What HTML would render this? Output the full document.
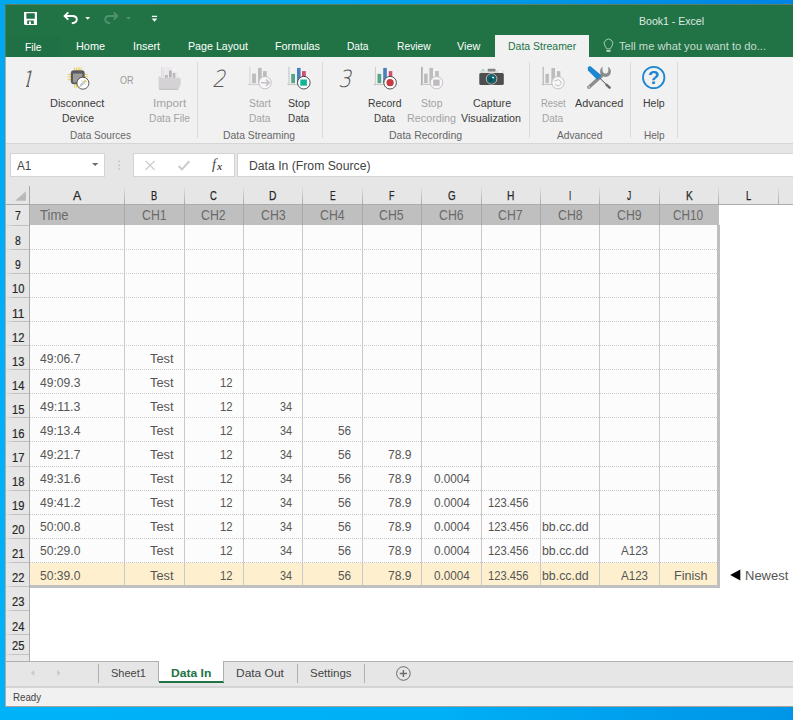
<!DOCTYPE html>
<html><head><meta charset="utf-8"><title>Book1 - Excel</title>
<style>
html,body{margin:0;padding:0;}
body{width:793px;height:720px;overflow:hidden;position:relative;font-family:"Liberation Sans",sans-serif;
 background:linear-gradient(90deg,#00a8f0 0%,#00a6ef 40%,#0092e6 75%,#0084e4 100%);}
.a{position:absolute;}
.t{position:absolute;white-space:pre;line-height:20px;height:20px;transform-origin:0 50%;font-family:"Liberation Sans",sans-serif;}
#bot{left:0;top:707px;width:793px;height:13px;background:linear-gradient(90deg,#00b2f8 0%,#00b0f6 55%,#009ceb 85%,#0096e8 100%);}
#lft{left:0;top:0;width:5px;height:720px;background:linear-gradient(180deg,#00a6f0,#00aff8 45%,#00b2f8);}
#win{left:5px;top:4px;width:788px;height:703px;background:#fff;}
#grn{left:5px;top:4.2px;width:788px;height:53.2px;background:#217346;}
#atab{left:495px;top:35px;width:94px;height:23px;background:#f1f1f1;}
#rib{left:5px;top:57.4px;width:788px;height:85.6px;background:#f1f1f1;}
#fbar{left:5px;top:143px;width:788px;height:61px;background:#e6e6e6;}
.box{background:#fff;border:1px solid #d4d4d4;box-sizing:border-box;}
.gsep{width:1px;top:62px;height:76px;background:#dcdcdc;}
.csep{width:1px;top:186px;height:18px;background:linear-gradient(180deg,#e6e6e6,#a9a9a9);}
.vline{width:1px;top:225px;height:360px;background:#c9c9c9;}
.hdot{left:30px;width:687px;height:1px;background-image:repeating-linear-gradient(90deg,#c6c6c6 0,#c6c6c6 1px,transparent 1px,transparent 2px);}
.rsep{left:5px;width:24px;height:1px;background:linear-gradient(90deg,#dedede,#c2c2c2 40%,#c0c0c0);}
</style></head><body>
<div class="a" id="lft"></div>
<div class="a" id="bot"></div>
<div class="a" id="win"></div>
<div class="a" id="grn"></div>
<div class="a" style="left:5px;top:35.6px;width:54.5px;height:21.8px;background:#1f7044"></div>
<div class="a" id="atab"></div>
<div class="a" id="rib"></div>
<div class="a" id="fbar"></div>
<div class="a" style="left:5px;top:142.9px;width:788px;height:1px;background:#d6d6d6"></div>
<!-- ribbon group separators -->
<div class="a gsep" style="left:197px"></div>
<div class="a gsep" style="left:322px"></div>
<div class="a gsep" style="left:529px"></div>
<div class="a gsep" style="left:630px"></div>
<div class="a gsep" style="left:677px"></div>
<!-- formula bar boxes -->
<div class="a box" style="left:10px;top:153px;width:95px;height:24px"></div>
<div class="a box" style="left:133px;top:153px;width:101.6px;height:24px"></div>
<div class="a box" style="left:237px;top:153px;width:570px;height:24px"></div>
<!-- grid area -->
<div class="a" style="left:5px;top:204px;width:25px;height:457px;background:#e6e6e6"></div>
<div class="a" style="left:29px;top:186px;width:1px;height:475px;background:#ababab"></div>
<div class="a" style="left:5px;top:203.7px;width:788px;height:1.2px;background:#ababab"></div>
<div class="a" style="left:30px;top:204.9px;width:689px;height:20.3px;background:#bfbfbf"></div>
<div class="a" style="left:30px;top:225.2px;width:688px;height:361px;background:#fcfcfc"></div>
<div class="a" style="left:30px;top:562.8px;width:688px;height:23px;background:#fef0ce"></div>
<div class="a" style="left:717px;top:225px;width:2.6px;height:362.5px;background:#bfbfbf"></div>
<div class="a" style="left:30px;top:585px;width:689.6px;height:2.6px;background:#c0c0c0"></div>
<div class="a csep" style="left:124.0px"></div>
<div class="a csep" style="left:183.5px"></div>
<div class="a csep" style="left:242.9px"></div>
<div class="a csep" style="left:302.3px"></div>
<div class="a csep" style="left:361.7px"></div>
<div class="a csep" style="left:421.1px"></div>
<div class="a csep" style="left:480.5px"></div>
<div class="a csep" style="left:539.9px"></div>
<div class="a csep" style="left:599.3px"></div>
<div class="a csep" style="left:658.7px"></div>
<div class="a csep" style="left:718.1px"></div>
<div class="a csep" style="left:777.5px"></div>
<div class="a vline" style="left:124.0px"></div>
<div class="a" style="left:124.0px;top:204.9px;width:1px;height:20.3px;background:#a9a9a9"></div>
<div class="a vline" style="left:183.5px"></div>
<div class="a" style="left:183.5px;top:204.9px;width:1px;height:20.3px;background:#a9a9a9"></div>
<div class="a vline" style="left:242.9px"></div>
<div class="a" style="left:242.9px;top:204.9px;width:1px;height:20.3px;background:#a9a9a9"></div>
<div class="a vline" style="left:302.3px"></div>
<div class="a" style="left:302.3px;top:204.9px;width:1px;height:20.3px;background:#a9a9a9"></div>
<div class="a vline" style="left:361.7px"></div>
<div class="a" style="left:361.7px;top:204.9px;width:1px;height:20.3px;background:#a9a9a9"></div>
<div class="a vline" style="left:421.1px"></div>
<div class="a" style="left:421.1px;top:204.9px;width:1px;height:20.3px;background:#a9a9a9"></div>
<div class="a vline" style="left:480.5px"></div>
<div class="a" style="left:480.5px;top:204.9px;width:1px;height:20.3px;background:#a9a9a9"></div>
<div class="a vline" style="left:539.9px"></div>
<div class="a" style="left:539.9px;top:204.9px;width:1px;height:20.3px;background:#a9a9a9"></div>
<div class="a vline" style="left:599.3px"></div>
<div class="a" style="left:599.3px;top:204.9px;width:1px;height:20.3px;background:#a9a9a9"></div>
<div class="a vline" style="left:658.7px"></div>
<div class="a" style="left:658.7px;top:204.9px;width:1px;height:20.3px;background:#a9a9a9"></div>
<div class="a hdot" style="top:248.8px"></div>
<div class="a hdot" style="top:272.9px"></div>
<div class="a hdot" style="top:296.9px"></div>
<div class="a hdot" style="top:321.0px"></div>
<div class="a hdot" style="top:345.1px"></div>
<div class="a hdot" style="top:369.2px"></div>
<div class="a hdot" style="top:393.3px"></div>
<div class="a hdot" style="top:417.3px"></div>
<div class="a hdot" style="top:441.4px"></div>
<div class="a hdot" style="top:465.5px"></div>
<div class="a hdot" style="top:489.6px"></div>
<div class="a hdot" style="top:513.7px"></div>
<div class="a hdot" style="top:537.7px"></div>
<div class="a hdot" style="top:561.8px"></div>
<div class="a rsep" style="top:224.6px"></div>
<div class="a rsep" style="top:248.8px"></div>
<div class="a rsep" style="top:272.9px"></div>
<div class="a rsep" style="top:296.9px"></div>
<div class="a rsep" style="top:321.0px"></div>
<div class="a rsep" style="top:345.1px"></div>
<div class="a rsep" style="top:369.2px"></div>
<div class="a rsep" style="top:393.3px"></div>
<div class="a rsep" style="top:417.3px"></div>
<div class="a rsep" style="top:441.4px"></div>
<div class="a rsep" style="top:465.5px"></div>
<div class="a rsep" style="top:489.6px"></div>
<div class="a rsep" style="top:513.7px"></div>
<div class="a rsep" style="top:537.7px"></div>
<div class="a rsep" style="top:561.8px"></div>
<div class="a rsep" style="top:585.9px"></div>
<div class="a rsep" style="top:610.0px"></div>
<div class="a rsep" style="top:634.1px"></div>
<div class="a rsep" style="top:653.7px"></div>
<!-- sheet tab bar -->
<div class="a" style="left:5px;top:661px;width:788px;height:26px;background:#e6e6e6"></div>
<div class="a" style="left:5px;top:660.7px;width:788px;height:1.2px;background:#b0b0b0"></div>
<div class="a" style="left:158.5px;top:661px;width:65px;height:21px;background:#fff"></div>
<div class="a" style="left:158.5px;top:681.3px;width:65px;height:2px;background:#217346"></div>
<div class="a" style="left:158px;top:661px;width:1px;height:21px;background:#b0b0b0"></div>
<div class="a" style="left:223px;top:661px;width:1px;height:21px;background:#b0b0b0"></div>
<div class="a" style="left:98.3px;top:664px;width:1px;height:18.5px;background:#b0b0b0"></div>
<div class="a" style="left:296.7px;top:664px;width:1px;height:18.5px;background:#b0b0b0"></div>
<div class="a" style="left:364.3px;top:664px;width:1px;height:18.5px;background:#b0b0b0"></div>
<div class="a" style="left:5px;top:686px;width:788px;height:1.5px;background:#d4d4d4"></div>
<div class="a" style="left:5px;top:687.5px;width:788px;height:19.5px;background:#f1f1f1"></div>
<div class="a" style="left:5px;top:4px;width:788px;height:1px;background:#5d7f5f"></div>
<div class="a" style="left:5px;top:57px;width:1px;height:650px;background:#b3aaa5"></div>
<div class="a" style="left:5px;top:4px;width:1px;height:53px;background:#4f7a55"></div>
<div class="a" style="left:5px;top:706.4px;width:788px;height:1px;background:#a9a29c"></div>
<svg class="a" style="left:0;top:0" width="793" height="720" viewBox="0 0 793 720">
<!-- save icon -->
<g fill="#fff">
<path d="M24 12 h13 v13 h-12 l-1 -1 z M26.4 13.2 v5.6 h8.4 v-5.6 z M27.2 20.6 v3.4 h6.6 v-3.4 z M29 21.6 h2 v2.4 h-2z" fill-rule="evenodd"/>
</g>
<!-- undo -->
<g fill="none" stroke="#fff" stroke-width="1.9" stroke-linejoin="miter">
<path d="M68.3 12.3 L64.6 16 L68.3 19.7"/>
<path d="M64.8 16 H72.5 C75.3 16 76.8 17.6 76.8 19.6 C76.8 21.6 75 23 71.8 23.2"/>
</g>
<path d="M85.3 16.9 h4.8 l-2.4 2.8z" fill="#fff"/>
<!-- redo -->
<g fill="none" stroke="#4f9370" stroke-width="1.9">
<path d="M113.7 12.3 L117.4 16 L113.7 19.7"/>
<path d="M117.2 16 H109.5 C106.7 16 105.2 17.6 105.2 19.6 C105.2 21.6 107 23 110.2 23.2"/>
</g>
<path d="M126 16.9 h4.8 l-2.4 2.8z" fill="#4f9370"/>
<!-- customize QAT -->
<path d="M151.9 15.7 h5.2 v1.3 h-5.2z M151.7 18.4 h5.6 l-2.8 3.3z" fill="#fff"/>
<!-- lightbulb -->
<path d="M606.9 48.9 L605 45.9 A4.3 4.3 0 1 1 612 45.9 L610.1 48.9 Z" fill="none" stroke="#a9ccb8" stroke-width="1"/>
<path d="M605.9 50 h5.2 l-1 1.9 h-3.2z" fill="#a9ccb8"/>
<!-- chip icon -->
<g fill="#ecd15c">
<rect x="74" y="67.4" width="1" height="3"/><rect x="76" y="67.4" width="1.3" height="3"/><rect x="78.4" y="67.4" width="1.3" height="3"/><rect x="80.6" y="67.4" width="1" height="3"/>
<rect x="74" y="84.4" width="1" height="3.4"/><rect x="76" y="84.4" width="1.3" height="3.4"/>
<rect x="67.6" y="74" width="3.4" height="1"/><rect x="67.6" y="76.2" width="3.4" height="1.2"/><rect x="67.6" y="79" width="3.4" height="1.2"/>
<rect x="84.6" y="74" width="3.4" height="1"/><rect x="84.6" y="76.2" width="3.4" height="1.2"/>
</g>
<rect x="70.8" y="70.2" width="13.9" height="14" rx="3.3" fill="#5a5a5a"/>
<rect x="73" y="73.4" width="9.4" height="9" rx="0.8" fill="#9a9a9a"/>
<circle cx="82.9" cy="83.2" r="6" fill="#fff" stroke="#4a4a4a" stroke-width="0.9"/>
<g stroke="#c3c9cc" stroke-width="2.2" stroke-linecap="round"><path d="M80.8 85.4 L84.2 82"/></g>
<path d="M79.6 86.6 L81 85.2" stroke="#b9c0c4" stroke-width="1"/>
<path d="M84.2 79.8 L85.6 81.2 M85.4 81.2 L86.6 82.4" stroke="#e9c73c" stroke-width="1.1"/>
<path d="M81.3 80.2 L85.8 84.8" stroke="#d4d8da" stroke-width="1"/>
<!-- import icon -->
<path d="M161.1 67.1 H172.6 L178 71.6 V77 H161.1Z" fill="#ece9ec"/>
<path d="M172.6 67.1 L178 71.6 H172.6Z" fill="#f6f4f6"/>
<rect x="161.2" y="67.4" width="0.9" height="9.4" fill="#d9d6d9"/>
<rect x="163" y="70" width="0.9" height="7" fill="#dcd9dc"/>
<rect x="165" y="75" width="2.7" height="3" fill="#b9b6b9"/>
<rect x="169" y="70.6" width="2.7" height="7" fill="#b4b1b4"/>
<rect x="172.8" y="73" width="2.5" height="5" fill="#b9b6b9"/>
<path d="M158.4 76.6 H160.6 L161.2 77.8 H178 L178.4 76.4 L179.4 78.4 H180.8 V84 L178.4 89.4 H158.8Z" fill="#d5d2d5"/>
<rect x="159" y="88.9" width="19.2" height="0.9" fill="#bdbabd"/>
<!-- Start Data (disabled) -->
<rect x="249.3" y="66.9" width="1.1" height="18.4" fill="#d6d6d6"/><rect x="248.2" y="83.9" width="12" height="1.1" fill="#d0d0d0"/>
<rect x="252.1" y="73.7" width="3.8" height="9.4" fill="#bdbbbd"/><rect x="258" y="67.9" width="3.7" height="15.2" fill="#bdbbbd"/><rect x="263" y="71.1" width="3.7" height="12" fill="#bdbbbd"/>
<circle cx="265" cy="82.7" r="6.2" fill="#f8f6f8" stroke="#bdbdbd" stroke-width="0.9"/>
<path d="M261 82.7 H269 M266 79.5 L269.2 82.7 L266 85.9" fill="none" stroke="#c2c0c2" stroke-width="1.5"/>
<!-- Stop Data -->
<rect x="288.4" y="66.9" width="1.1" height="18.4" fill="#c6c6c6"/><rect x="287.3" y="83.9" width="12" height="1.1" fill="#c6c6c6"/>
<rect x="291.2" y="73.9" width="3.8" height="9.2" fill="#55a688"/><rect x="297" y="67.9" width="3.6" height="15.2" fill="#4a7fbd"/><rect x="302" y="71.1" width="3.8" height="12" fill="#cf506f"/>
<circle cx="303.8" cy="82.7" r="6.3" fill="#fff" stroke="#3c3c3c" stroke-width="0.9"/>
<rect x="300.3" y="79.5" width="6.6" height="6.2" fill="#12b497"/>
<!-- Record Data -->
<rect x="374.9" y="66.9" width="1.1" height="18.4" fill="#d0d0d0"/><rect x="373.8" y="83.9" width="12" height="1.1" fill="#c6c6c6"/>
<rect x="377.5" y="73.9" width="3.7" height="9.2" fill="#55a688"/><rect x="383.2" y="67.9" width="3.6" height="15.2" fill="#4a7fbd"/><rect x="388.8" y="71.1" width="3.5" height="12" fill="#cf506f"/>
<circle cx="390.1" cy="82.7" r="6.3" fill="#fff" stroke="#3c3c3c" stroke-width="0.9"/>
<circle cx="390.1" cy="82.7" r="3.6" fill="#c73a3f"/>
<!-- Stop Recording (disabled) -->
<rect x="421" y="66.9" width="1.7" height="18.4" fill="#b0aeb0"/><rect x="420.2" y="83.9" width="12" height="1.1" fill="#c6c6c6"/>
<rect x="424.1" y="73.7" width="3.5" height="9.4" fill="#bdbbbd"/><rect x="429.4" y="67.9" width="3.6" height="15.2" fill="#bdbbbd"/><rect x="435.2" y="71.1" width="3.6" height="12" fill="#bdbbbd"/>
<circle cx="436.5" cy="82.7" r="6.2" fill="#f8f6f8" stroke="#bdbdbd" stroke-width="0.9"/>
<rect x="433.2" y="79.6" width="6.4" height="6.2" fill="#bdbbbd"/>
<!-- Camera -->
<rect x="479.6" y="70.6" width="24" height="3.4" rx="1" fill="#dedede"/>
<rect x="499" y="70.9" width="3.2" height="1.7" fill="#fbfbfb"/>
<rect x="487.7" y="68.8" width="7.8" height="2.6" rx="0.6" fill="#858585"/>
<circle cx="483.2" cy="69.9" r="1" fill="#8cc4cc"/>
<rect x="479.3" y="72.9" width="24.5" height="12.1" rx="1.6" fill="#4e4e4e"/>
<circle cx="491.6" cy="78.9" r="5.3" fill="#3c3c3c" stroke="#dcdcdc" stroke-width="0.8"/>
<circle cx="491.6" cy="78.9" r="4.3" fill="#0b6b76"/>
<circle cx="490.8" cy="79.7" r="2.4" fill="#07545e"/>
<ellipse cx="493.1" cy="77.6" rx="1.1" ry="0.8" fill="#fff"/>
<!-- Reset Data (disabled) -->
<rect x="542.6" y="66.9" width="1.3" height="18.4" fill="#bcbabc"/><rect x="541.5" y="83.9" width="12" height="1.1" fill="#c6c6c6"/>
<rect x="545.4" y="73.9" width="3.5" height="9.2" fill="#bdbbbd"/><rect x="551.4" y="68" width="3.6" height="15.1" fill="#bdbbbd"/><rect x="556.9" y="71.1" width="3.4" height="12" fill="#bdbbbd"/>
<circle cx="558" cy="82.7" r="6.2" fill="#f8f6f8" stroke="#bdbdbd" stroke-width="0.9"/>
<path d="M556 80.6 A3 3 0 1 1 555.2 84" fill="none" stroke="#c2c0c2" stroke-width="1"/>
<path d="M554.6 79.4 L556.4 81.2 L554.4 81.6Z" fill="#c2c0c2"/>
<!-- Advanced: wrench + screwdriver -->
<path d="M587.2 86.4 L600.6 74.2 C599.4 71.4 600.2 68.6 602.5 66.6 V71 C603.2 72.9 604.6 73.6 605.5 73.6 C606.8 73.6 607.9 72.6 608.3 71.2 V66.8 C610.8 68.6 611.6 71.6 610.4 74 C609 76.6 606 77.6 603.4 76.6 L590 88.6 C588.6 89.6 586.4 88 587.2 86.4Z" fill="#8d8d8d"/>
<circle cx="589.2" cy="87" r="0.8" fill="#e4e4e4"/>
<path d="M599.6 77.9 L606.6 84.8" stroke="#4c4c4c" stroke-width="1"/>
<path d="M606.6 84.8 L609.6 87.6" stroke="#6a6a6a" stroke-width="2.5" stroke-linecap="round"/>
<path d="M587.8 67.4 C588.4 66.4 590 65.9 590.9 66.4 L601.5 75.6 L597.4 80 L588 70.6Z" fill="#1c86d1"/>
<!-- Help -->
<circle cx="653.7" cy="77.5" r="10.7" fill="none" stroke="#1c86d1" stroke-width="1.8"/>
<text x="653.7" y="84.4" font-family="Liberation Sans, sans-serif" font-size="19" font-weight="700" fill="#1c86d1" text-anchor="middle">?</text>
<!-- formula bar icons -->
<path d="M92 162.9 h6.4 l-3.2 3.2z" fill="#6a6a6a"/>
<g fill="#a8a8a8"><rect x="118.5" y="160.8" width="1.2" height="1.2"/><rect x="118.5" y="164.6" width="1.2" height="1.2"/><rect x="118.5" y="168.4" width="1.2" height="1.2"/></g>
<path d="M145.6 160.9 L154.6 169.9 M154.6 160.9 L145.6 169.9" stroke="#c9c9c9" stroke-width="1.3"/>
<path d="M178.6 166 L182 169.4 L189.4 161.2" fill="none" stroke="#c9c9c9" stroke-width="1.9"/>
<text x="212" y="169.4" font-family="Liberation Serif, serif" font-style="italic" font-size="14.6" fill="#4a4a4a">f</text>
<text x="217" y="169.8" font-family="Liberation Serif, serif" font-style="italic" font-weight="700" font-size="10.5" fill="#4a4a4a">x</text>
<!-- select-all triangle -->
<path d="M25.9 191.3 V200.8 H15.2Z" fill="#b9b9b9"/>
<!-- Newest arrow -->
<path d="M740.3 569.6 V580.6 L730.2 575.1Z" fill="#000"/>
<!-- sheet nav arrows -->
<path d="M34.3 670 V676 L30.8 673Z" fill="#c9c9c9"/>
<path d="M57.2 670 V676 L60.7 673Z" fill="#c9c9c9"/>
<!-- new sheet button -->
<circle cx="403.4" cy="673.5" r="6.8" fill="none" stroke="#6b6b6b" stroke-width="1"/>
<path d="M399.8 673.5 H407 M403.4 669.9 V677.1" stroke="#6b6b6b" stroke-width="1.4"/>
</svg>

<span class="t" style="left:638.6px;top:10.80px;font-size:11.6px;color:#dfeae3;transform:scaleX(0.9087);">Book1 - Excel</span>
<span class="t" style="left:24.6px;top:37.00px;font-size:11.8px;color:#ffffff;transform:scaleX(0.8730);">File</span>
<span class="t" style="left:76.3px;top:36.00px;font-size:11.8px;color:#ffffff;transform:scaleX(0.9215);">Home</span>
<span class="t" style="left:133.4px;top:36.00px;font-size:11.8px;color:#ffffff;transform:scaleX(0.9182);">Insert</span>
<span class="t" style="left:187.7px;top:36.00px;font-size:11.8px;color:#ffffff;transform:scaleX(0.9042);">Page Layout</span>
<span class="t" style="left:274.8px;top:36.00px;font-size:11.8px;color:#ffffff;transform:scaleX(0.9152);">Formulas</span>
<span class="t" style="left:347.2px;top:36.00px;font-size:11.8px;color:#ffffff;transform:scaleX(0.8627);">Data</span>
<span class="t" style="left:396.6px;top:36.00px;font-size:11.8px;color:#ffffff;transform:scaleX(0.8711);">Review</span>
<span class="t" style="left:457.1px;top:36.00px;font-size:11.8px;color:#ffffff;transform:scaleX(0.9148);">View</span>
<span class="t" style="left:507.6px;top:36.00px;font-size:11.8px;color:#217346;transform:scaleX(0.8890);">Data Streamer</span>
<span class="t" style="left:619.2px;top:36.00px;font-size:11.8px;color:#c9ddd1;transform:scaleX(0.9459);">Tell me what you want to do...</span>
<span class="t" style="left:20.6px;top:46.80px;font-size:69.6px;color:#5c5c5c;transform-origin:0 40.00px;transform:skewX(-13deg) scale(0.3115,0.3333);font-family:'Noto Sans CJK SC','Liberation Sans',sans-serif;font-weight:300;">1</span>
<span class="t" style="left:211.6px;top:52.60px;font-size:70.80000000000001px;color:#565656;transform-origin:0 34.00px;transform:skewX(-13deg) scale(0.2930,0.3333);font-family:'DejaVu Sans',sans-serif;font-weight:200;">2</span>
<span class="t" style="left:338.4px;top:52.60px;font-size:70.80000000000001px;color:#565656;transform-origin:0 34.00px;transform:skewX(-13deg) scale(0.2886,0.3333);font-family:'DejaVu Sans',sans-serif;font-weight:200;">3</span>
<span class="t" style="left:120.2px;top:69.90px;font-size:10.6px;color:#9a9a9a;transform:scaleX(0.8559);">OR</span>
<span class="t" style="left:50.4px;top:93.00px;font-size:11.7px;color:#3b3b3b;transform:scaleX(0.9390);">Disconnect</span>
<span class="t" style="left:61.8px;top:108.00px;font-size:11.7px;color:#3b3b3b;transform:scaleX(0.8955);">Device</span>
<span class="t" style="left:153.3px;top:93.00px;font-size:11.7px;color:#a3a3a3;transform:scaleX(1.0053);">Import</span>
<span class="t" style="left:148.8px;top:108.00px;font-size:11.7px;color:#a3a3a3;transform:scaleX(0.8743);">Data File</span>
<span class="t" style="left:248.7px;top:93.00px;font-size:11.7px;color:#a3a3a3;transform:scaleX(0.8871);">Start</span>
<span class="t" style="left:249.2px;top:108.00px;font-size:11.7px;color:#a3a3a3;transform:scaleX(0.8663);">Data</span>
<span class="t" style="left:287.8px;top:93.00px;font-size:11.7px;color:#3b3b3b;transform:scaleX(0.9107);">Stop</span>
<span class="t" style="left:288.3px;top:108.00px;font-size:11.7px;color:#3b3b3b;transform:scaleX(0.8460);">Data</span>
<span class="t" style="left:367.6px;top:93.00px;font-size:11.7px;color:#3b3b3b;transform:scaleX(0.8889);">Record</span>
<span class="t" style="left:374.4px;top:108.00px;font-size:11.7px;color:#3b3b3b;transform:scaleX(0.8460);">Data</span>
<span class="t" style="left:420.5px;top:93.00px;font-size:11.7px;color:#a3a3a3;transform:scaleX(0.8941);">Stop</span>
<span class="t" style="left:406.7px;top:108.00px;font-size:11.7px;color:#a3a3a3;transform:scaleX(0.9215);">Recording</span>
<span class="t" style="left:472.7px;top:93.00px;font-size:11.7px;color:#3b3b3b;transform:scaleX(0.9160);">Capture</span>
<span class="t" style="left:461.4px;top:108.00px;font-size:11.7px;color:#3b3b3b;transform:scaleX(0.9173);">Visualization</span>
<span class="t" style="left:540.7px;top:93.00px;font-size:11.7px;color:#a3a3a3;transform:scaleX(0.8086);">Reset</span>
<span class="t" style="left:542.2px;top:108.00px;font-size:11.7px;color:#a3a3a3;transform:scaleX(0.8582);">Data</span>
<span class="t" style="left:574.7px;top:93.00px;font-size:11.7px;color:#3b3b3b;transform:scaleX(0.9272);">Advanced</span>
<span class="t" style="left:642.8px;top:93.00px;font-size:11.7px;color:#3b3b3b;transform:scaleX(0.9024);">Help</span>
<span class="t" style="left:70.1px;top:125.00px;font-size:10.7px;color:#666666;transform:scaleX(0.9419);">Data Sources</span>
<span class="t" style="left:223.2px;top:125.00px;font-size:10.7px;color:#666666;transform:scaleX(0.9708);">Data Streaming</span>
<span class="t" style="left:389.0px;top:125.00px;font-size:10.7px;color:#666666;transform:scaleX(0.9843);">Data Recording</span>
<span class="t" style="left:557.1px;top:125.00px;font-size:10.7px;color:#666666;transform:scaleX(0.9548);">Advanced</span>
<span class="t" style="left:643.6px;top:125.00px;font-size:10.7px;color:#666666;transform:scaleX(0.9416);">Help</span>
<span class="t" style="left:17.2px;top:155.60px;font-size:12.3px;color:#444444;transform:scaleX(0.9504);">A1</span>
<span class="t" style="left:249.4px;top:155.80px;font-size:12.3px;color:#444444;transform:scaleX(0.9932);">Data In (From Source)</span>
<span class="t" style="left:72.9px;top:186.00px;font-size:12.3px;color:#262626;transform:scaleX(0.9996);-webkit-text-stroke:0.25px #262626;">A</span>
<span class="t" style="left:151.2px;top:186.00px;font-size:12.3px;color:#262626;transform:scaleX(0.7558);-webkit-text-stroke:0.25px #262626;">B</span>
<span class="t" style="left:210.3px;top:186.00px;font-size:12.3px;color:#262626;transform:scaleX(0.7649);-webkit-text-stroke:0.25px #262626;">C</span>
<span class="t" style="left:269.4px;top:186.00px;font-size:12.3px;color:#262626;transform:scaleX(0.8323);-webkit-text-stroke:0.25px #262626;">D</span>
<span class="t" style="left:329.7px;top:186.00px;font-size:12.3px;color:#262626;transform:scaleX(0.6827);-webkit-text-stroke:0.25px #262626;">E</span>
<span class="t" style="left:389.2px;top:186.00px;font-size:12.3px;color:#262626;transform:scaleX(0.7185);-webkit-text-stroke:0.25px #262626;">F</span>
<span class="t" style="left:447.5px;top:186.00px;font-size:12.3px;color:#262626;transform:scaleX(0.7935);-webkit-text-stroke:0.25px #262626;">G</span>
<span class="t" style="left:507.0px;top:186.00px;font-size:12.3px;color:#262626;transform:scaleX(0.8323);-webkit-text-stroke:0.25px #262626;">H</span>
<span class="t" style="left:569.0px;top:186.00px;font-size:12.3px;color:#262626;transform:scaleX(0.6429);-webkit-text-stroke:0.25px #262626;">I</span>
<span class="t" style="left:627.4px;top:186.00px;font-size:12.3px;color:#262626;transform:scaleX(0.6822);-webkit-text-stroke:0.25px #262626;">J</span>
<span class="t" style="left:685.5px;top:186.00px;font-size:12.3px;color:#262626;transform:scaleX(0.8290);-webkit-text-stroke:0.25px #262626;">K</span>
<span class="t" style="left:745.7px;top:186.00px;font-size:12.3px;color:#262626;transform:scaleX(0.7598);-webkit-text-stroke:0.25px #262626;">L</span>
<span class="t" style="left:40.4px;top:204.80px;font-size:14.4px;color:#6a6a6a;transform:scaleX(0.9061);">Time</span>
<span class="t" style="left:141.6px;top:204.80px;font-size:14.4px;color:#6a6a6a;transform:scaleX(0.8543);">CH1</span>
<span class="t" style="left:201.1px;top:204.80px;font-size:14.4px;color:#6a6a6a;transform:scaleX(0.8543);">CH2</span>
<span class="t" style="left:260.5px;top:204.80px;font-size:14.4px;color:#6a6a6a;transform:scaleX(0.8543);">CH3</span>
<span class="t" style="left:319.9px;top:204.80px;font-size:14.4px;color:#6a6a6a;transform:scaleX(0.8543);">CH4</span>
<span class="t" style="left:379.3px;top:204.80px;font-size:14.4px;color:#6a6a6a;transform:scaleX(0.8543);">CH5</span>
<span class="t" style="left:438.7px;top:204.80px;font-size:14.4px;color:#6a6a6a;transform:scaleX(0.8543);">CH6</span>
<span class="t" style="left:498.1px;top:204.80px;font-size:14.4px;color:#6a6a6a;transform:scaleX(0.8543);">CH7</span>
<span class="t" style="left:557.5px;top:204.80px;font-size:14.4px;color:#6a6a6a;transform:scaleX(0.8543);">CH8</span>
<span class="t" style="left:616.9px;top:204.80px;font-size:14.4px;color:#6a6a6a;transform:scaleX(0.8543);">CH9</span>
<span class="t" style="left:672.6px;top:204.80px;font-size:14.4px;color:#6a6a6a;transform:scaleX(0.8153);">CH10</span>
<span class="t" style="left:14.8px;top:205.80px;font-size:12.3px;color:#262626;transform:scaleX(0.8475);-webkit-text-stroke:0.2px #262626;">7</span>
<span class="t" style="left:14.8px;top:231.28px;font-size:12.3px;color:#262626;transform:scaleX(0.8475);-webkit-text-stroke:0.2px #262626;">8</span>
<span class="t" style="left:14.8px;top:255.36px;font-size:12.3px;color:#262626;transform:scaleX(0.8475);-webkit-text-stroke:0.2px #262626;">9</span>
<span class="t" style="left:11.5px;top:279.44px;font-size:12.3px;color:#262626;transform:scaleX(0.9059);-webkit-text-stroke:0.2px #262626;">10</span>
<span class="t" style="left:11.5px;top:303.52px;font-size:12.3px;color:#262626;transform:scaleX(0.9714);-webkit-text-stroke:0.2px #262626;">11</span>
<span class="t" style="left:11.5px;top:327.60px;font-size:12.3px;color:#262626;transform:scaleX(0.9059);-webkit-text-stroke:0.2px #262626;">12</span>
<span class="t" style="left:11.5px;top:351.68px;font-size:12.3px;color:#262626;transform:scaleX(0.9059);-webkit-text-stroke:0.2px #262626;">13</span>
<span class="t" style="left:11.5px;top:375.76px;font-size:12.3px;color:#262626;transform:scaleX(0.9059);-webkit-text-stroke:0.2px #262626;">14</span>
<span class="t" style="left:11.5px;top:399.84px;font-size:12.3px;color:#262626;transform:scaleX(0.9059);-webkit-text-stroke:0.2px #262626;">15</span>
<span class="t" style="left:11.5px;top:423.92px;font-size:12.3px;color:#262626;transform:scaleX(0.9059);-webkit-text-stroke:0.2px #262626;">16</span>
<span class="t" style="left:11.5px;top:448.00px;font-size:12.3px;color:#262626;transform:scaleX(0.9059);-webkit-text-stroke:0.2px #262626;">17</span>
<span class="t" style="left:11.5px;top:472.08px;font-size:12.3px;color:#262626;transform:scaleX(0.9059);-webkit-text-stroke:0.2px #262626;">18</span>
<span class="t" style="left:11.5px;top:496.16px;font-size:12.3px;color:#262626;transform:scaleX(0.9059);-webkit-text-stroke:0.2px #262626;">19</span>
<span class="t" style="left:11.5px;top:520.24px;font-size:12.3px;color:#262626;transform:scaleX(0.9059);-webkit-text-stroke:0.2px #262626;">20</span>
<span class="t" style="left:11.5px;top:544.32px;font-size:12.3px;color:#262626;transform:scaleX(0.9059);-webkit-text-stroke:0.2px #262626;">21</span>
<span class="t" style="left:11.5px;top:568.40px;font-size:12.3px;color:#262626;transform:scaleX(0.9059);-webkit-text-stroke:0.2px #262626;">22</span>
<span class="t" style="left:11.5px;top:592.48px;font-size:12.3px;color:#262626;transform:scaleX(0.9059);-webkit-text-stroke:0.2px #262626;">23</span>
<span class="t" style="left:11.5px;top:616.56px;font-size:12.3px;color:#262626;transform:scaleX(0.9059);-webkit-text-stroke:0.2px #262626;">24</span>
<span class="t" style="left:11.5px;top:636.20px;font-size:12.3px;color:#262626;transform:scaleX(0.9059);-webkit-text-stroke:0.2px #262626;">25</span>
<span class="t" style="left:39.8px;top:348.78px;font-size:12px;color:#555555;transform:scaleX(1.0088);">49:06.7</span>
<span class="t" style="left:150.0px;top:348.78px;font-size:12px;color:#555555;transform:scaleX(1.0674);">Test</span>
<span class="t" style="left:39.8px;top:372.86px;font-size:12px;color:#555555;transform:scaleX(1.0088);">49:09.3</span>
<span class="t" style="left:150.0px;top:372.86px;font-size:12px;color:#555555;transform:scaleX(1.0674);">Test</span>
<span class="t" style="left:220.4px;top:372.86px;font-size:12px;color:#555555;transform:scaleX(0.9432);">12</span>
<span class="t" style="left:39.8px;top:396.94px;font-size:12px;color:#555555;transform:scaleX(1.0318);">49:11.3</span>
<span class="t" style="left:150.0px;top:396.94px;font-size:12px;color:#555555;transform:scaleX(1.0674);">Test</span>
<span class="t" style="left:220.4px;top:396.94px;font-size:12px;color:#555555;transform:scaleX(0.9432);">12</span>
<span class="t" style="left:279.6px;top:396.94px;font-size:12px;color:#555555;transform:scaleX(0.9057);">34</span>
<span class="t" style="left:39.8px;top:421.02px;font-size:12px;color:#555555;transform:scaleX(1.0088);">49:13.4</span>
<span class="t" style="left:150.0px;top:421.02px;font-size:12px;color:#555555;transform:scaleX(1.0674);">Test</span>
<span class="t" style="left:220.4px;top:421.02px;font-size:12px;color:#555555;transform:scaleX(0.9432);">12</span>
<span class="t" style="left:279.6px;top:421.02px;font-size:12px;color:#555555;transform:scaleX(0.9057);">34</span>
<span class="t" style="left:338.4px;top:421.02px;font-size:12px;color:#555555;transform:scaleX(0.9806);">56</span>
<span class="t" style="left:39.8px;top:445.10px;font-size:12px;color:#555555;transform:scaleX(1.0088);">49:21.7</span>
<span class="t" style="left:150.0px;top:445.10px;font-size:12px;color:#555555;transform:scaleX(1.0674);">Test</span>
<span class="t" style="left:220.4px;top:445.10px;font-size:12px;color:#555555;transform:scaleX(0.9432);">12</span>
<span class="t" style="left:279.6px;top:445.10px;font-size:12px;color:#555555;transform:scaleX(0.9057);">34</span>
<span class="t" style="left:338.4px;top:445.10px;font-size:12px;color:#555555;transform:scaleX(0.9806);">56</span>
<span class="t" style="left:387.7px;top:445.10px;font-size:12px;color:#555555;transform:scaleX(1.0060);">78.9</span>
<span class="t" style="left:39.8px;top:469.18px;font-size:12px;color:#555555;transform:scaleX(1.0088);">49:31.6</span>
<span class="t" style="left:150.0px;top:469.18px;font-size:12px;color:#555555;transform:scaleX(1.0674);">Test</span>
<span class="t" style="left:220.4px;top:469.18px;font-size:12px;color:#555555;transform:scaleX(0.9432);">12</span>
<span class="t" style="left:279.6px;top:469.18px;font-size:12px;color:#555555;transform:scaleX(0.9057);">34</span>
<span class="t" style="left:338.4px;top:469.18px;font-size:12px;color:#555555;transform:scaleX(0.9806);">56</span>
<span class="t" style="left:387.7px;top:469.18px;font-size:12px;color:#555555;transform:scaleX(1.0060);">78.9</span>
<span class="t" style="left:434.4px;top:469.18px;font-size:12px;color:#555555;transform:scaleX(0.9754);">0.0004</span>
<span class="t" style="left:39.8px;top:493.26px;font-size:12px;color:#555555;transform:scaleX(1.0088);">49:41.2</span>
<span class="t" style="left:150.0px;top:493.26px;font-size:12px;color:#555555;transform:scaleX(1.0674);">Test</span>
<span class="t" style="left:220.4px;top:493.26px;font-size:12px;color:#555555;transform:scaleX(0.9432);">12</span>
<span class="t" style="left:279.6px;top:493.26px;font-size:12px;color:#555555;transform:scaleX(0.9057);">34</span>
<span class="t" style="left:338.4px;top:493.26px;font-size:12px;color:#555555;transform:scaleX(0.9806);">56</span>
<span class="t" style="left:387.7px;top:493.26px;font-size:12px;color:#555555;transform:scaleX(1.0060);">78.9</span>
<span class="t" style="left:434.4px;top:493.26px;font-size:12px;color:#555555;transform:scaleX(0.9754);">0.0004</span>
<span class="t" style="left:487.9px;top:493.26px;font-size:12px;color:#555555;transform:scaleX(0.9357);">123.456</span>
<span class="t" style="left:39.8px;top:517.34px;font-size:12px;color:#555555;transform:scaleX(1.0088);">50:00.8</span>
<span class="t" style="left:150.0px;top:517.34px;font-size:12px;color:#555555;transform:scaleX(1.0674);">Test</span>
<span class="t" style="left:220.4px;top:517.34px;font-size:12px;color:#555555;transform:scaleX(0.9432);">12</span>
<span class="t" style="left:279.6px;top:517.34px;font-size:12px;color:#555555;transform:scaleX(0.9057);">34</span>
<span class="t" style="left:338.4px;top:517.34px;font-size:12px;color:#555555;transform:scaleX(0.9806);">56</span>
<span class="t" style="left:387.7px;top:517.34px;font-size:12px;color:#555555;transform:scaleX(1.0060);">78.9</span>
<span class="t" style="left:434.4px;top:517.34px;font-size:12px;color:#555555;transform:scaleX(0.9754);">0.0004</span>
<span class="t" style="left:487.9px;top:517.34px;font-size:12px;color:#555555;transform:scaleX(0.9357);">123.456</span>
<span class="t" style="left:541.9px;top:517.34px;font-size:12px;color:#555555;transform:scaleX(1.0270);">bb.cc.dd</span>
<span class="t" style="left:39.8px;top:541.42px;font-size:12px;color:#555555;transform:scaleX(1.0088);">50:29.0</span>
<span class="t" style="left:150.0px;top:541.42px;font-size:12px;color:#555555;transform:scaleX(1.0674);">Test</span>
<span class="t" style="left:220.4px;top:541.42px;font-size:12px;color:#555555;transform:scaleX(0.9432);">12</span>
<span class="t" style="left:279.6px;top:541.42px;font-size:12px;color:#555555;transform:scaleX(0.9057);">34</span>
<span class="t" style="left:338.4px;top:541.42px;font-size:12px;color:#555555;transform:scaleX(0.9806);">56</span>
<span class="t" style="left:387.7px;top:541.42px;font-size:12px;color:#555555;transform:scaleX(1.0060);">78.9</span>
<span class="t" style="left:434.4px;top:541.42px;font-size:12px;color:#555555;transform:scaleX(0.9754);">0.0004</span>
<span class="t" style="left:487.9px;top:541.42px;font-size:12px;color:#555555;transform:scaleX(0.9357);">123.456</span>
<span class="t" style="left:541.9px;top:541.42px;font-size:12px;color:#555555;transform:scaleX(1.0270);">bb.cc.dd</span>
<span class="t" style="left:620.8px;top:541.42px;font-size:12px;color:#555555;transform:scaleX(0.9632);">A123</span>
<span class="t" style="left:39.8px;top:565.50px;font-size:12px;color:#555555;transform:scaleX(1.0088);">50:39.0</span>
<span class="t" style="left:150.0px;top:565.50px;font-size:12px;color:#555555;transform:scaleX(1.0674);">Test</span>
<span class="t" style="left:220.4px;top:565.50px;font-size:12px;color:#555555;transform:scaleX(0.9432);">12</span>
<span class="t" style="left:279.6px;top:565.50px;font-size:12px;color:#555555;transform:scaleX(0.9057);">34</span>
<span class="t" style="left:338.4px;top:565.50px;font-size:12px;color:#555555;transform:scaleX(0.9806);">56</span>
<span class="t" style="left:387.7px;top:565.50px;font-size:12px;color:#555555;transform:scaleX(1.0060);">78.9</span>
<span class="t" style="left:434.4px;top:565.50px;font-size:12px;color:#555555;transform:scaleX(0.9754);">0.0004</span>
<span class="t" style="left:487.9px;top:565.50px;font-size:12px;color:#555555;transform:scaleX(0.9357);">123.456</span>
<span class="t" style="left:541.9px;top:565.50px;font-size:12px;color:#555555;transform:scaleX(1.0270);">bb.cc.dd</span>
<span class="t" style="left:620.8px;top:565.50px;font-size:12px;color:#555555;transform:scaleX(0.9632);">A123</span>
<span class="t" style="left:673.8px;top:565.50px;font-size:12px;color:#555555;transform:scaleX(1.0464);">Finish</span>
<span class="t" style="left:745.3px;top:565.70px;font-size:13.2px;color:#555555;transform:scaleX(0.9844);">Newest</span>
<span class="t" style="left:110.7px;top:663.00px;font-size:11.6px;color:#444444;transform:scaleX(0.9469);">Sheet1</span>
<span class="t" style="left:170.7px;top:663.00px;font-size:11.6px;color:#217346;transform:scaleX(1.0425);font-weight:700;">Data In</span>
<span class="t" style="left:235.8px;top:663.00px;font-size:11.6px;color:#444444;transform:scaleX(1.0322);">Data Out</span>
<span class="t" style="left:310.4px;top:663.00px;font-size:11.6px;color:#444444;transform:scaleX(0.9927);">Settings</span>
<span class="t" style="left:12.6px;top:687.60px;font-size:10.2px;color:#444444;transform:scaleX(0.9507);">Ready</span>
<div class="a" style="left:20px;top:84.5px;width:6.3px;height:3.2px;background:#f1f1f1"></div>
<div class="a" style="left:28.9px;top:84.5px;width:5px;height:3.2px;background:#f1f1f1"></div>
</body></html>
